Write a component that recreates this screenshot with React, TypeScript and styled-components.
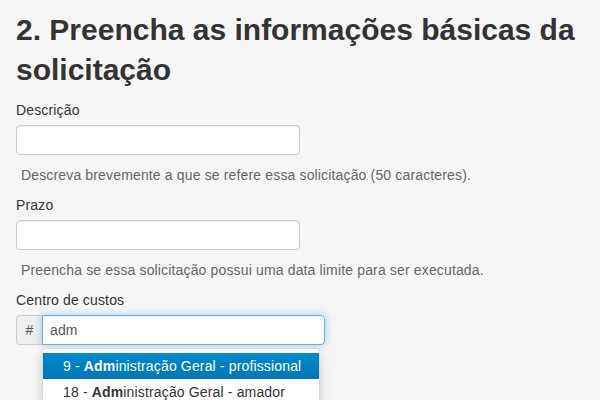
import React from "react";
import styled, { createGlobalStyle } from "styled-components";

const Global = createGlobalStyle`
  html, body { margin: 0; padding: 0; }
  body {
    background: #f6f6f6;
    font-family: "Liberation Sans", Arial, Helvetica, sans-serif;
    font-size: 14px;
    line-height: 20px;
    letter-spacing: 0.15px;
    color: #333;
    width: 600px;
    height: 400px;
    overflow: hidden;
  }
`;

const Page = styled.div`
  padding: 10px 16px 0 16px;
  display: flex;
  flex-direction: column;
`;

const Title = styled.h2`
  margin: 0 0 10px 0;
  font-size: 30px;
  line-height: 40px;
  font-weight: bold;
  letter-spacing: 0;
  color: #333;
`;

const Group = styled.div`
  display: flex;
  flex-direction: column;
  align-items: flex-start;
  margin-bottom: 10px;
`;

const Label = styled.label`
  font-size: 14px;
  line-height: 20px;
  margin-bottom: 5px;
  color: #333;
`;

const Input = styled.input<{ $width?: number }>`
  box-sizing: border-box;
  width: ${(p) => p.$width ?? 284}px;
  height: 30px;
  padding: 0 7px;
  font-family: inherit;
  font-size: 14px;
  letter-spacing: 0.15px;
  color: #555;
  background: #fff;
  border: 1px solid #ccc;
  border-radius: 4px;
  box-shadow: inset 0 1px 1px rgba(0, 0, 0, 0.075);
  outline: none;
`;

const Help = styled.span`
  margin-top: 10px;
  padding-left: 5px;
  font-size: 14px;
  line-height: 20px;
  color: #666;
`;

const InputGroup = styled.div`
  position: relative;
  display: flex;
  width: 309px;
  height: 30px;
`;

const Addon = styled.span`
  box-sizing: border-box;
  width: 26px;
  display: flex;
  align-items: center;
  justify-content: center;
  background: #eee;
  border: 1px solid #ccc;
  border-right: 0;
  border-radius: 4px 0 0 4px;
  font-size: 14px;
  color: #555;
`;

const FocusInput = styled(Input)`
  flex: 1;
  border-radius: 0 4px 4px 0;
  border-color: #66afe9;
  box-shadow: inset 0 1px 1px rgba(0, 0, 0, 0.075),
    0 0 8px rgba(102, 175, 233, 0.6);
  color: #555;
`;

const Menu = styled.ul`
  position: absolute;
  top: 33px;
  left: 26px;
  width: 278px;
  box-sizing: border-box;
  margin: 0;
  padding: 4px 0;
  list-style: none;
  background: #fff;
  border: 1px solid rgba(0, 0, 0, 0.15);
  border-radius: 4px;
  box-shadow: 0 6px 12px rgba(0, 0, 0, 0.175);
  z-index: 10;
`;

const Item = styled.li<{ $active?: boolean }>`
  padding: 3px 20px;
  font-size: 14px;
  line-height: 20px;
  white-space: nowrap;
  color: ${(p) => (p.$active ? "#fff" : "#333")};
  background: ${(p) =>
    p.$active ? "linear-gradient(#0088cc, #0077b3)" : "transparent"};
`;

const items = [
  { id: 9, rest: "inistração Geral - profissional" },
  { id: 18, rest: "inistração Geral - amador" },
];

export default function App() {
  return (
    <>
      <Global />
      <Page>
        <Title>2. Preencha as informações básicas da solicitação</Title>
        <Group>
          <Label>Descrição</Label>
          <Input type="text" />
          <Help>Descreva brevemente a que se refere essa solicitação (50 caracteres).</Help>
        </Group>
        <Group>
          <Label>Prazo</Label>
          <Input type="text" />
          <Help>Preencha se essa solicitação possui uma data limite para ser executada.</Help>
        </Group>
        <Group>
          <Label>Centro de custos</Label>
          <InputGroup>
            <Addon>#</Addon>
            <FocusInput type="text" defaultValue="adm" />
            <Menu>
              {items.map((it, i) => (
                <Item key={it.id} $active={i === 0}>
                  {it.id} - <strong>Adm</strong>
                  {it.rest}
                </Item>
              ))}
            </Menu>
          </InputGroup>
        </Group>
      </Page>
    </>
  );
}
